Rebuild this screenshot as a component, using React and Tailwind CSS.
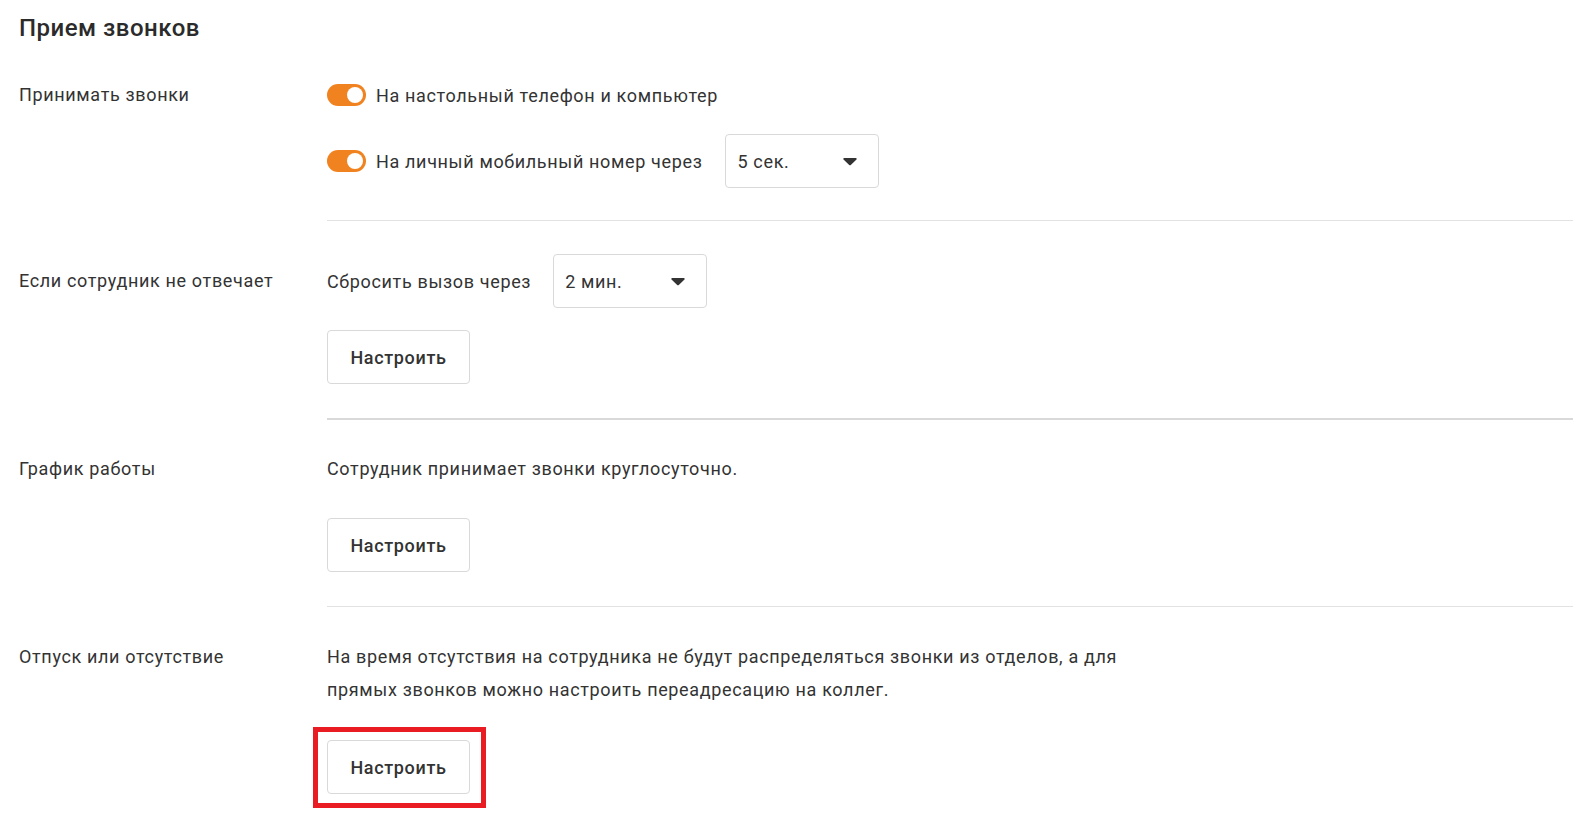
import React, { useState } from "react";

const Toggle = ({ on, onChange }) => (
  <button
    type="button"
    onClick={onChange}
    className={`relative w-[39px] h-[22px] rounded-full shrink-0 ${
      on ? "bg-[#f0821f]" : "bg-[#cfcfcf]"
    }`}
  >
    <span
      className={`absolute top-[3px] w-[16px] h-[16px] rounded-full bg-white ${
        on ? "right-[3px]" : "left-[3px]"
      }`}
    />
  </button>
);

const Select = ({ value }) => (
  <div className="w-[154px] h-[54px] border border-[#d9d9d9] rounded-[4px] flex items-center justify-between pl-[11px] pr-[21px] bg-white cursor-pointer">
    <span>{value}</span>
    <svg width="14" height="9" viewBox="0 0 14 9">
      <path
        d="M1.2 1h11.6c.8 0 1.2.9.7 1.5L7.8 7.9c-.4.5-1.2.5-1.6 0L.5 2.5C0 1.9.4 1 1.2 1z"
        fill="#333"
      />
    </svg>
  </div>
);

const SetupButton = ({ marked }) => (
  <div className="relative w-fit">
    <button className="w-[143px] h-[54px] border border-[#d9d9d9] rounded-[4px] bg-white font-medium text-[#333] tracking-[0.65px]">
      Настроить
    </button>
    {marked && (
      <div className="absolute -left-[14px] -top-[13px] -right-[16px] -bottom-[14px] border-[5px] border-[#e91c24] pointer-events-none" />
    )}
  </div>
);

const Section = ({ label, labelLeading, top, divider, children }) => (
  <div className={`grid grid-cols-[308px_1fr] ${top}`}>
    <div className={labelLeading}>{label}</div>
    <div className={divider}>{children}</div>
  </div>
);

export default function App() {
  const [desk, setDesk] = useState(true);
  const [mobile, setMobile] = useState(true);

  return (
    <div
      className="bg-white min-h-[816px] pl-[19px] pr-[16px] text-[18px] tracking-[0.65px] text-[#333]"
      style={{ fontFamily: "Roboto, 'Noto Sans', sans-serif" }}
    >
      <h1 className="pt-[12px] text-[24px] leading-[32px] font-medium tracking-[0.5px] text-[#2b2b2b]">
        Прием звонков
      </h1>

      <Section
        label="Принимать звонки"
        labelLeading="leading-[54px] pt-px"
        top="pt-[23px]"
        divider="border-b border-[#e2e2e2] pb-[32px]"
      >
        <div className="flex flex-col gap-[12px] pt-px">
          <div className="h-[54px] flex items-center gap-[10px]">
            <Toggle on={desk} onChange={() => setDesk(!desk)} />
            <span>На настольный телефон и компьютер</span>
          </div>
          <div className="h-[54px] flex items-center">
            <Toggle on={mobile} onChange={() => setMobile(!mobile)} />
            <span className="ml-[10px] mr-[23px]">На личный мобильный номер через</span>
            <Select value="5 сек." />
          </div>
        </div>
      </Section>

      <Section
        label="Если сотрудник не отвечает"
        labelLeading="leading-[54px]"
        top="pt-[33px]"
        divider="border-b-2 border-[#d9d9d9] pb-[34px]"
      >
        <div className="flex items-center gap-[22px]">
          <span>Сбросить вызов через</span>
          <Select value="2 мин." />
        </div>
        <div className="mt-[22px]">
          <SetupButton />
        </div>
      </Section>

      <Section
        label="График работы"
        labelLeading="leading-[33px]"
        top="pt-[32px]"
        divider="border-b border-[#e2e2e2] pb-[34px]"
      >
        <p className="leading-[33px]">Сотрудник принимает звонки круглосуточно.</p>
        <div className="mt-[33px]">
          <SetupButton />
        </div>
      </Section>

      <Section
        label="Отпуск или отсутствие"
        labelLeading="leading-[33px]"
        top="pt-[33px]"
      >
        <p className="leading-[33px] max-w-[800px]">
          На время отсутствия на сотрудника не будут распределяться звонки из отделов, а для
          прямых звонков можно настроить переадресацию на коллег.
        </p>
        <div className="mt-[34px]">
          <SetupButton marked />
        </div>
      </Section>
    </div>
  );
}
